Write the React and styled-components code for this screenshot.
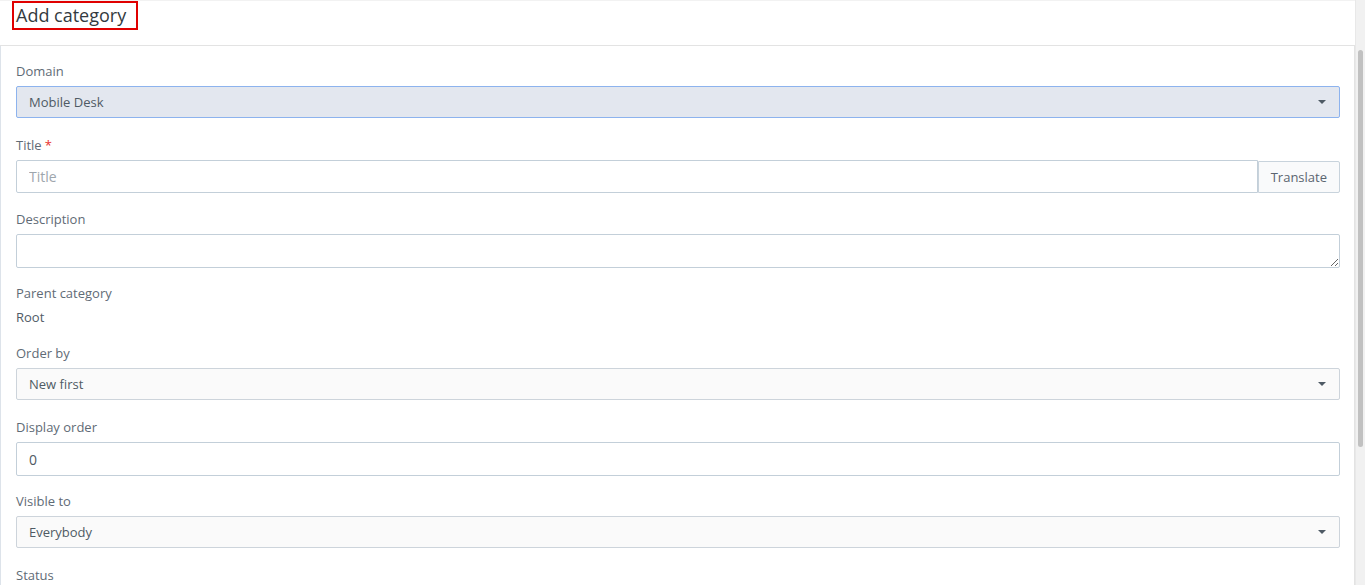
import styled, { createGlobalStyle } from 'styled-components'

const GlobalStyle = createGlobalStyle`
    html, body {
        margin: 0;
        padding: 0;
        background: #ffffff;
        font-family: "Open Sans", "Noto Sans", sans-serif;
    }
`

const Page = styled.div`
    display: flex;
    height: 100vh;
    overflow: hidden;
`

const Main = styled.div`
    flex: 1;
    min-width: 0;
`

const ScrollTrack = styled.div`
    width: 10px;
    flex-shrink: 0;
    box-sizing: border-box;
    background: #f1f1f1;
    border-left: 1px solid #e8e8e8;
    padding: 50px 2px 0 2px;
`

const ScrollThumb = styled.div`
    height: 397px;
    border-radius: 4px;
    background: #c1c1c1;
`

const Header = styled.header`
    height: 44px;
    border-top: 1px solid #f2f2f2;
    border-bottom: 1px solid #e3e3e3;
    display: flex;
    align-items: flex-start;
    padding-left: 12px;
`

const PageTitle = styled.h1`
    margin: 0;
    border: 2px solid #e00000;
    padding: 0 10px 0 2px;
    height: 25px;
    line-height: 24px;
    font-size: 18px;
    font-weight: 400;
    color: #333a40;
`

const Panel = styled.main`
    border-left: 1px solid #dde3ea;
    border-right: 1px solid #e3e3e3;
    padding: 16px 14px 24px 15px;
`

const Field = styled.div`
    margin-bottom: ${p => p.$gap || 17}px;
`

const Label = styled.div`
    font-size: 13px;
    line-height: 18px;
    color: #5f6b76;
    margin-bottom: 6px;
`

const Required = styled.span`
    color: #e8312f;
    margin-left: 3px;
`

const Value = styled.div`
    margin-top: 2px;
    font-size: 13px;
    line-height: 18px;
    color: #505b66;
`

const SelectBox = styled.div`
    height: 30px;
    border: 1px solid ${p => (p.$active ? '#8db3ee' : '#cdd4db')};
    background: ${p => (p.$active ? '#e3e7ef' : '#fafafa')};
    border-radius: 2px;
    display: flex;
    align-items: center;
    justify-content: space-between;
    padding: 0 12px;
    font-size: 13px;
    color: #4f5a64;
`

const Caret = styled.span`
    width: 0;
    height: 0;
    border-left: 4px solid transparent;
    border-right: 4px solid transparent;
    border-top: 4px solid #4e5a65;
    margin-right: 1px;
`

const InputGroup = styled.div`
    display: flex;
    align-items: center;
`

const TextInput = styled.input`
    flex: 1;
    height: ${p => p.$h || 33}px;
    box-sizing: border-box;
    border: 1px solid #c3cfd9;
    border-radius: 2px;
    padding: 0 12px;
    font-family: inherit;
    font-size: 14px;
    color: #4f5a64;
    background: #fff;
    outline: none;
    &::placeholder {
        color: #9ea6ad;
    }
`

const GroupInput = styled(TextInput)`
    border-radius: 2px 0 0 2px;
`

const AddonButton = styled.button`
    height: 32px;
    border: 1px solid #c8d3dc;
    border-radius: 0 2px 2px 0;
    background: #f9fafb;
    padding: 0 12px;
    font-family: inherit;
    font-size: 13px;
    color: #5b6570;
`

const TextArea = styled.textarea`
    display: block;
    width: 100%;
    box-sizing: border-box;
    height: 34px;
    border: 1px solid #c3cfd9;
    border-radius: 2px;
    padding: 6px 12px;
    font-family: inherit;
    font-size: 14px;
    resize: vertical;
    outline: none;
`

const Actions = styled.div`
    display: flex;
    gap: 8px;
    padding-top: 8px;
`

const Button = styled.button`
    height: 32px;
    padding: 0 16px;
    border-radius: 2px;
    font-family: inherit;
    font-size: 13px;
    border: 1px solid ${p => (p.$primary ? '#2d7fd3' : '#c3cfd9')};
    background: ${p => (p.$primary ? '#3a8ee0' : '#f9fafb')};
    color: ${p => (p.$primary ? '#fff' : '#5b6570')};
`

function Select({ value, active }) {
    return <SelectBox $active={active}>
        <span>{value}</span>
        <Caret />
    </SelectBox>
}

export default function App() {
    return <Page>
        <GlobalStyle />
        <Main>
            <Header>
                <PageTitle>Add category</PageTitle>
            </Header>
            <Panel>
                <Field $gap={18}>
                    <Label>Domain</Label>
                    <Select value="Mobile Desk" active />
                </Field>
                <Field $gap={17}>
                    <Label>Title<Required>*</Required></Label>
                    <InputGroup>
                        <GroupInput placeholder="Title" />
                        <AddonButton>Translate</AddonButton>
                    </InputGroup>
                </Field>
                <Field $gap={16}>
                    <Label>Description</Label>
                    <TextArea />
                </Field>
                <Field $gap={18}>
                    <Label>Parent category</Label>
                    <Value>Root</Value>
                </Field>
                <Field $gap={18}>
                    <Label>Order by</Label>
                    <Select value="New first" />
                </Field>
                <Field $gap={16}>
                    <Label>Display order</Label>
                    <InputGroup>
                        <TextInput $h={34} defaultValue="0" />
                    </InputGroup>
                </Field>
                <Field $gap={18}>
                    <Label>Visible to</Label>
                    <Select value="Everybody" />
                </Field>
                <Field $gap={24}>
                    <Label>Status</Label>
                    <Select value="Active" />
                </Field>
                <Actions>
                    <Button $primary>Save</Button>
                    <Button>Cancel</Button>
                </Actions>
            </Panel>
        </Main>
        <ScrollTrack>
            <ScrollThumb />
        </ScrollTrack>
    </Page>
}
